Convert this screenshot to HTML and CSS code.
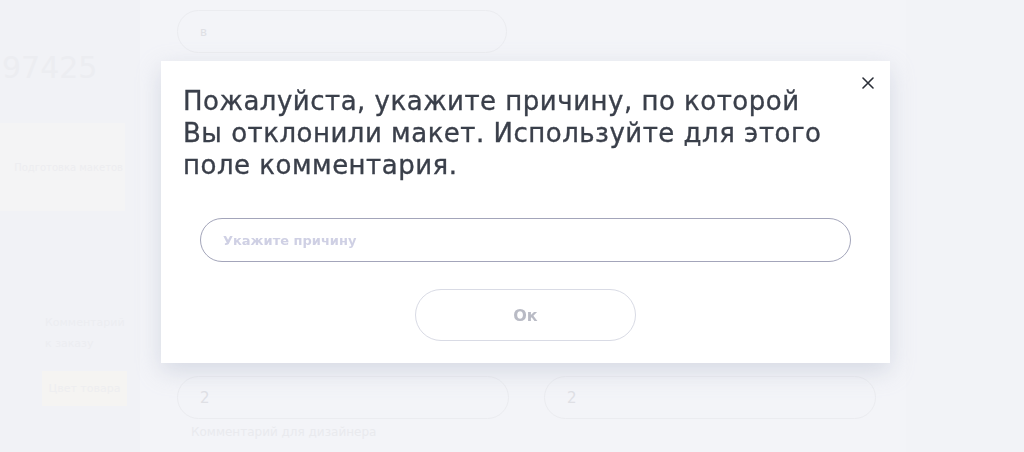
FILE: index.html
```html
<!DOCTYPE html>
<html lang="ru">
<head>
<meta charset="utf-8">
<title>Отклонение макета</title>
<link rel="stylesheet" href="styles.css">
</head>
<body>
<div class="page">
  <aside class="side">
    <div class="side-num">97425</div>
    <div class="side-band"><span>Подготовка макетов</span></div>
    <div class="side-lines">
      <div class="side-line">Комментарий</div>
      <div class="side-line">к заказу</div>
    </div>
    <div class="side-tag">Цвет товара</div>
  </aside>
  <main class="main">
    <div class="field top"><span>в</span></div>
    <div class="spacer"></div>
    <div class="row">
      <div class="field"><span>2</span></div>
      <div class="field"><span>2</span></div>
    </div>
    <div class="hint">Комментарий для дизайнера</div>
  </main>
  <aside class="right"></aside>
</div>

<div class="modal">
  <button class="close" type="button" aria-label="Закрыть">
    <svg width="12" height="12" viewBox="0 0 12 12"><path d="M1 1L11 11M11 1L1 11" stroke="#2b2f38" stroke-width="1.6" stroke-linecap="round"/></svg>
  </button>
  <h2 class="title">Пожалуйста, укажите причину, по которой<br>Вы отклонили макет. Используйте для этого<br>поле комментария.</h2>
  <div class="reason"><span>Укажите причину</span></div>
  <div class="actions"><button class="ok" type="button">Ок</button></div>
</div>
</body>
</html>
```

FILE: styles.css
```css
html, body {
  margin: 0;
  padding: 0;
}
body {
  width: 1024px;
  height: 452px;
  overflow: hidden;
  background: #f1f2f6;
  font-family: "DejaVu Sans", "Noto Sans", sans-serif;
}
.page {
  display: grid;
  grid-template-columns: 140px 766px 1fr;
  height: 452px;
}
.side {
  display: flex;
  flex-direction: column;
  background: #f1f2f6;
}
.side-num {
  margin-top: 48px;
  margin-left: 2px;
  font-size: 30px;
  color: #ecedf1;
  line-height: 40px;
  height: 75px;
}
.side-band {
  height: 88px;
  width: 125px;
  background: #f4f4f5;
  display: flex;
  align-items: center;
  justify-content: flex-end;
  white-space: nowrap;
}
.side-band span {
  font-size: 10px;
  color: #ededf0;
  padding-right: 2px;
}
.side-lines {
  margin-top: 105px;
  padding-left: 45px;
  display: flex;
  flex-direction: column;
  gap: 8px;
  height: 55px;
  white-space: nowrap;
}
.side-line {
  font-size: 11px;
  color: #ecedf1;
}
.side-tag {
  margin-left: 42px;
  width: 85px;
  height: 35px;
  background: #f5f4f2;
  color: #eeeef0;
  font-size: 11px;
  line-height: 35px;
  white-space: nowrap;
  text-align: center;
}
.main {
  background: #f3f4f8;
  padding: 10px 0 0 37px;
  display: flex;
  flex-direction: column;
}
.field {
  width: 330px;
  height: 43px;
  border: 1px solid #ebecf0;
  border-radius: 22px;
  box-sizing: border-box;
  display: flex;
  align-items: center;
  padding-left: 22px;
  color: #dfe0e5;
  font-size: 15px;
}
.top span { font-size: 12px; }
.spacer { height: 323px; }
.row {
  display: flex;
  gap: 35px;
}
.row .field { width: 332px; }
.hint {
  margin-top: 6px;
  padding-left: 14px;
  font-size: 12px;
  color: #e9eaee;
}
.right { background: #f2f3f7; }

.modal {
  position: fixed;
  left: 161px;
  top: 61px;
  width: 729px;
  height: 302px;
  background: #ffffff;
  box-sizing: border-box;
  padding: 24px 22px 0 22px;
  box-shadow: 0 8px 22px rgba(180, 186, 205, 0.45);
  display: flex;
  flex-direction: column;
}
.close {
  position: absolute;
  right: 16px;
  top: 16px;
  width: 12px;
  height: 12px;
  padding: 0;
  border: 0;
  background: none;
  display: flex;
}
.title {
  margin: 0;
  font-size: 26px;
  line-height: 32px;
  font-weight: normal;
  letter-spacing: 0.5px;
  -webkit-text-stroke: 0.35px #3a3f4a;
  color: #3a3f4a;
  white-space: nowrap;
}
.reason {
  margin: 37px 17px 0 17px;
  height: 44px;
  border: 1px solid #a3a5ba;
  border-radius: 22px;
  box-sizing: border-box;
  display: flex;
  align-items: center;
  padding-left: 22px;
}
.reason span {
  font-size: 13px;
  font-weight: 700;
  color: #cfd0e4;
}
.actions {
  display: flex;
  justify-content: center;
  margin-top: 27px;
}
.ok {
  width: 221px;
  height: 52px;
  border: 1px solid #d9dbe5;
  border-radius: 26px;
  background: #fff;
  font-family: inherit;
  font-size: 16px;
  font-weight: 700;
  color: #b9bbc5;
}
```
